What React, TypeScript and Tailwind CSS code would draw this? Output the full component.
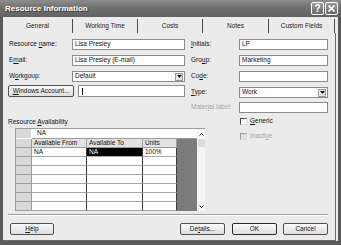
import React from "react";

const U = ({ children }: { children: React.ReactNode }) => (
  <span className="underline underline-offset-[1px] decoration-[0.5px]">{children}</span>
);

function Arrow() {
  return (
    <div className="ml-auto w-[8px] h-[8px] mr-[1px] bg-[#e6e6e6] border border-[#9a9a9a] flex items-center justify-center">
      <svg width="5" height="3" viewBox="0 0 5 3">
        <path d="M0 0 L5 0 L2.5 3 Z" fill="#111" />
      </svg>
    </div>
  );
}

function Field({
  w,
  h = "h-[11px]",
  value,
  select,
  cursor,
}: {
  w: string;
  h?: string;
  value?: string;
  select?: boolean;
  cursor?: boolean;
}) {
  return (
    <div className={`${w} ${h} bg-white border border-[#8c8c8c] flex items-center pl-[2px] text-[#111]`}>
      {cursor && <div className="w-[1px] h-[7px] bg-black ml-[1px]" />}
      {value && <span>{value}</span>}
      {select && <Arrow />}
    </div>
  );
}

function Btn({ children, className = "", def }: { children: React.ReactNode; className?: string; def?: boolean }) {
  return (
    <div
      className={`h-[12px] rounded-[2px] bg-gradient-to-b from-[#fbfbfb] to-[#dedede] flex items-center justify-center text-[#111] ${
        def ? "border-[1.5px] border-[#2a2a2a]" : "border border-[#505050]"
      } ${className}`}
    >
      {children}
    </div>
  );
}

function Check({ disabled }: { disabled?: boolean }) {
  return (
    <div
      className={`w-[7px] h-[7px] border-l border-t border-[#4a4a4a] border-r border-b border-r-[#d8d8d8] border-b-[#d8d8d8] ${
        disabled ? "bg-[#e2e2e2] border-l-[#9a9a9a] border-t-[#9a9a9a]" : "bg-white"
      }`}
    />
  );
}

export default function App() {
  const tabs: [string, string][] = [
    ["General", "w-[70px]"],
    ["Working Time", "w-[65px]"],
    ["Costs", "w-[65px]"],
    ["Notes", "w-[66px]"],
    ["Custom Fields", "w-[66px]"],
  ];
  const rows = [0, 1, 2, 3, 4, 5, 6];
  return (
    <div className="w-[341px] h-[245px] bg-[#5a5a5a] flex flex-col font-['Liberation_Sans',Arial,sans-serif] text-[6.5px] leading-none text-[#111] overflow-hidden">
      {/* Title bar */}
      <div className="h-[17px] shrink-0 flex items-center pl-[5px] pr-[3px] bg-gradient-to-b from-[#8e8e8e] via-[#6e6e6e] to-[#626262]">
        <span className="text-white font-bold text-[8px] [text-shadow:1px_1px_0_#3a3a3a]">Resource Information</span>
        <div className="ml-auto flex gap-[1px]">
          <div className="w-[13px] h-[13px] rounded-[2px] border border-white bg-gradient-to-b from-[#9a9a9a] to-[#6a6a6a] text-white font-bold text-[10px] flex items-center justify-center">
            ?
          </div>
          <div className="w-[13px] h-[13px] rounded-[2px] border border-white bg-gradient-to-b from-[#9a9a9a] to-[#6a6a6a] flex items-center justify-center">
            <svg width="7" height="7" viewBox="0 0 7 7">
              <path d="M0.5 0.5 L6.5 6.5 M6.5 0.5 L0.5 6.5" stroke="#fff" strokeWidth="1.6" />
            </svg>
          </div>
        </div>
      </div>

      {/* Body */}
      <div className="flex-1 mx-[3px] mb-[4px] bg-[#ebebeb] flex flex-col">
        {/* Tabs */}
        <div className="h-[16px] shrink-0 flex pt-[2px]">
          {tabs.map(([t, w]) => (
            <div key={t} className={`${w} h-full flex items-center justify-center border-r border-[#4a4a4a] text-[#1a1a1a]`}>
              {t}
            </div>
          ))}
        </div>

        {/* Panel */}
        <div className="flex-1 mr-[2px] border-r border-b border-[#6a6a6a] flex flex-col">
          <div className="pt-[6px] flex flex-col">
            {/* Row 1 */}
            <div className="flex h-[11px] items-center">
              <div className="w-[69px] pl-[6px]">
                Resource <U>n</U>ame:
              </div>
              <Field w="w-[113px]" value="Lisa Presley" />
              <div className="w-[48px] ml-[6px]">
                <U>I</U>nitials:
              </div>
              <Field w="w-[89px]" value="LP" />
            </div>
            {/* Row 2 */}
            <div className="flex h-[11px] items-center mt-[5px]">
              <div className="w-[69px] pl-[6px]">
                E<U>m</U>ail:
              </div>
              <Field w="w-[113px]" value="Lisa Presley (E-mail)" />
              <div className="w-[48px] ml-[6px]">
                Gro<U>u</U>p:
              </div>
              <Field w="w-[89px]" value="Marketing" />
            </div>
            {/* Row 3 */}
            <div className="flex h-[11px] items-center mt-[5px]">
              <div className="w-[69px] pl-[6px]">
                W<U>o</U>rkgoup:
              </div>
              <Field w="w-[113px]" value="Default" select />
              <div className="w-[48px] ml-[6px]">
                Co<U>d</U>e:
              </div>
              <Field w="w-[89px]" />
            </div>
            {/* Row 4 */}
            <div className="flex h-[13px] items-start mt-[3px]">
              <div className="w-[182px] pl-[5px] flex gap-[4px]">
                <Btn className="w-[66px]">
                  <span>
                    <U>W</U>indows Account...
                  </span>
                </Btn>
                <Field w="w-[107px]" h="h-[12px]" cursor />
              </div>
              <div className="flex items-center mt-[2px] h-[11px]">
                <div className="w-[48px] ml-[6px]">
                  <U>T</U>ype:
                </div>
                <Field w="w-[89px]" value="Work" select />
              </div>
            </div>
            {/* Row 5 */}
            <div className="flex h-[11px] items-center mt-[4px]">
              <div className="w-[182px]" />
              <div className="w-[48px] ml-[6px] text-[#a6a6a6]">
                Mater<U>i</U>al label:
              </div>
              <Field w="w-[89px]" />
            </div>
          </div>

          {/* Bottom section */}
          <div className="flex">
            <div className="w-[202px] flex flex-col">
              <div className="h-[9px] mt-[5px] pl-[5px] flex items-center">
                <span>
                  Resource <U>A</U>vailability
                </span>
              </div>
              {/* Grid */}
              <div className="ml-[12px] mt-[1px] w-[190px] flex border-t border-l border-[#9c9c9c]">
                <div className="w-[181px] flex flex-col">
                  <div className="h-[10px] flex">
                    <div className="w-[16px] h-full bg-[#d9d9d9] border-r border-b border-[#ffffff]" />
                    <div className="flex-1 bg-white flex items-center pl-[5px] border-b border-[#9c9c9c]">NA</div>
                  </div>
                  <div className="flex">
                    <div className="w-[161px] flex flex-col">
                      <div className="h-[9px] flex bg-[#e2e2e2]">
                        <div className="w-[16px] h-full border-r border-b border-[#9c9c9c] bg-[#d9d9d9]" />
                        <div className="w-[55px] h-full border-r border-b border-[#9c9c9c] flex items-center pl-[2px]">
                          Available From
                        </div>
                        <div className="w-[56px] h-full border-r border-b border-[#9c9c9c] flex items-center pl-[2px]">
                          Available To
                        </div>
                        <div className="w-[34px] h-full border-r border-b border-[#9c9c9c] flex items-center pl-[2px]">
                          Units
                        </div>
                      </div>
                      {rows.map((r) => (
                        <div key={r} className="h-[9px] flex bg-white">
                          <div className="w-[16px] h-full border-r border-b border-[#9c9c9c] bg-[#d9d9d9]" />
                          <div className="w-[55px] h-full border-r border-b border-r-[#3a3a3a] border-b-[#a8a8a8] flex items-center pl-[2px]">
                            {r === 0 ? "NA" : ""}
                          </div>
                          <div
                            className={`w-[56px] h-full border-r border-b border-r-[#3a3a3a] border-b-[#a8a8a8] flex items-center pl-[2px] ${
                              r === 0 ? "bg-black text-white" : ""
                            }`}
                          >
                            {r === 0 ? "NA" : ""}
                          </div>
                          <div className="w-[34px] h-full border-r border-b border-r-[#3a3a3a] border-b-[#a8a8a8] flex items-center pl-[2px]">
                            {r === 0 ? "100%" : ""}
                          </div>
                        </div>
                      ))}
                    </div>
                    <div className="w-[20px] bg-[#7c7c7c]" />
                  </div>
                </div>
                {/* Scrollbar */}
                <div className="w-[9px] bg-[#f5f5f5] flex flex-col items-center">
                  <div className="h-[10px] flex items-center justify-center">
                    <svg width="5" height="3" viewBox="0 0 5 3">
                      <path d="M0.5 2.5 L2.5 0.5 L4.5 2.5" stroke="#333" strokeWidth="1" fill="none" />
                    </svg>
                  </div>
                  <div className="w-[7px] h-[8px] bg-[#dcdcdc] rounded-[1px]" />
                  <div className="mt-auto h-[10px] flex items-center justify-center">
                    <svg width="5" height="3" viewBox="0 0 5 3">
                      <path d="M0.5 0.5 L2.5 2.5 L4.5 0.5" stroke="#333" strokeWidth="1" fill="none" />
                    </svg>
                  </div>
                </div>
              </div>
            </div>
            {/* Checkboxes */}
            <div className="ml-[35px] flex flex-col pt-[5px] gap-[8px]">
              <div className="flex items-center h-[7px] gap-[3px]">
                <Check />
                <span>
                  <U>G</U>eneric
                </span>
              </div>
              <div className="flex items-center h-[7px] gap-[3px] text-[#a6a6a6]">
                <Check disabled />
                <span>
                  Inacti<U>v</U>e
                </span>
              </div>
            </div>
          </div>

          {/* Separator */}
          <div className="ml-[5px] mt-[3px] w-[320px] h-[2px] border-t border-[#a0a0a0] border-b border-b-white" />

          {/* Buttons */}
          <div className="flex mt-[7px]">
            <Btn className="w-[44px] ml-[7px]">
              <span>
                <U>H</U>elp
              </span>
            </Btn>
            <Btn className="w-[45px] ml-[126px]">
              <span>
                De<U>t</U>ails...
              </span>
            </Btn>
            <Btn className="w-[45px] ml-[7px]" def>
              OK
            </Btn>
            <Btn className="w-[45px] ml-[6px]">Cancel</Btn>
          </div>
        </div>
      </div>
    </div>
  );
}
